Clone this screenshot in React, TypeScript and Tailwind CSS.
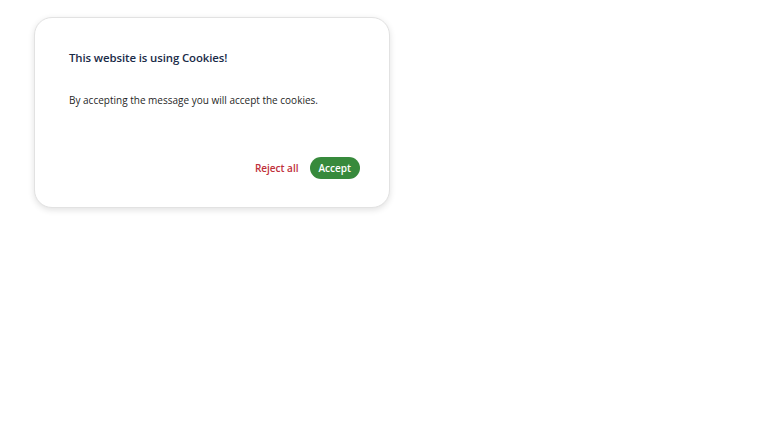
export default function App() {
  return (
    <div className="min-h-[443px] bg-white font-['Open_Sans',sans-serif]">
      <div className="ml-[34px] pt-[17px]">
        <div className="flex h-[191px] w-[356px] flex-col rounded-[18px] border border-[#e2e2e2] bg-white pt-[32px] pr-[29px] pb-[28px] pl-[34px] shadow-[0_2px_6px_rgba(0,0,0,0.12)]">
          <h1 className="text-[11.4px] leading-4 font-semibold tracking-[-0.1px] text-[#1a2b48]">This website is using Cookies!</h1>
          <p className="mt-[26px] text-[10px] leading-4 text-[#1f1f1f]">By accepting the message you will accept the cookies.</p>
          <div className="mt-auto flex items-center justify-end gap-[11px]">
            <button className="text-[10px] font-semibold text-[#c0303a]">Reject all</button>
            <button className="h-[22px] rounded-full bg-[#378a3c] px-[9px] text-[10px] font-semibold text-white">Accept</button>
          </div>
        </div>
      </div>
    </div>
  );
}
